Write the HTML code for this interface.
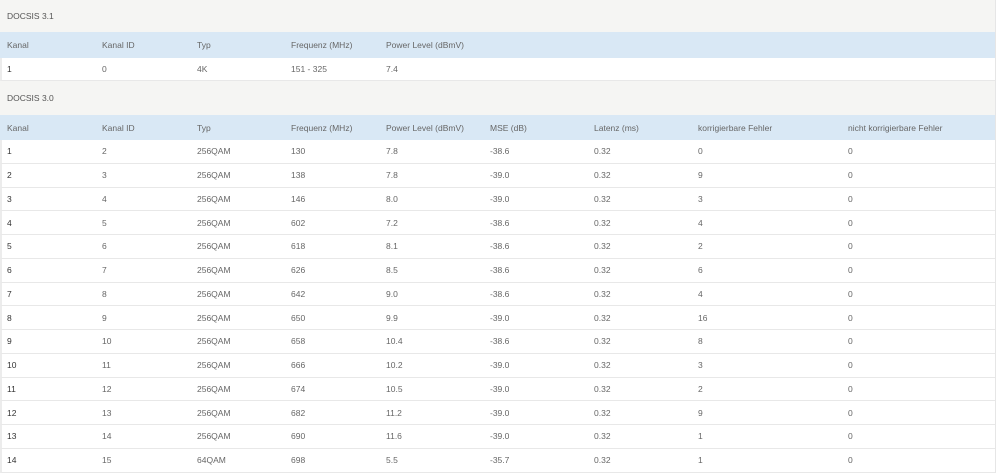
<!DOCTYPE html>
<html><head><meta charset="utf-8"><style>
body{margin:0;background:#fff;font-family:"Liberation Sans",sans-serif;font-size:8.5px;color:#666;}
#w{position:absolute;left:0;top:0;width:995px;border-right:1px solid #e6e6e6;}
.t{background:#f5f5f3;color:#555;padding-left:5px;box-sizing:border-box;display:flex;align-items:center;border-left:2px solid #f5f5f3}
.h{background:#d9e8f5;color:#666;}
.r{display:flex;align-items:center;box-sizing:border-box;border-bottom:1px solid #e8e8e8;position:relative;border-left:2px solid #ececec}
.h.r{border-left:2px solid #d9e8f5;border-bottom:none}
.r span{position:absolute;white-space:nowrap}
.r span:first-child{color:#333}
.h.r span:first-child{color:#666}
</style></head><body><div id="w">
<div class="t" style="height:32px">DOCSIS 3.1</div>
<div class="r h" style="height:26px"><span style="left:5px">Kanal</span><span style="left:100px">Kanal ID</span><span style="left:195px">Typ</span><span style="left:289px">Frequenz (MHz)</span><span style="left:384px">Power Level (dBmV)</span></div>
<div class="r" style="height:23px"><span style="left:5px">1</span><span style="left:100px">0</span><span style="left:195px">4K</span><span style="left:289px">151 - 325</span><span style="left:384px">7.4</span></div>
<div class="t" style="height:34px">DOCSIS 3.0</div>
<div class="r h" style="height:25px"><span style="left:5px">Kanal</span><span style="left:100px">Kanal ID</span><span style="left:195px">Typ</span><span style="left:289px">Frequenz (MHz)</span><span style="left:384px">Power Level (dBmV)</span><span style="left:488px">MSE (dB)</span><span style="left:592px">Latenz (ms)</span><span style="left:696px">korrigierbare Fehler</span><span style="left:846px">nicht korrigierbare Fehler</span></div>
<div id="rows"></div>
</div>
<script>
var d=[[1,2,"256QAM",130,"7.8","-38.6",0],[2,3,"256QAM",138,"7.8","-39.0",9],[3,4,"256QAM",146,"8.0","-39.0",3],[4,5,"256QAM",602,"7.2","-38.6",4],[5,6,"256QAM",618,"8.1","-38.6",2],[6,7,"256QAM",626,"8.5","-38.6",6],[7,8,"256QAM",642,"9.0","-38.6",4],[8,9,"256QAM",650,"9.9","-39.0",16],[9,10,"256QAM",658,"10.4","-38.6",8],[10,11,"256QAM",666,"10.2","-39.0",3],[11,12,"256QAM",674,"10.5","-39.0",2],[12,13,"256QAM",682,"11.2","-39.0",9],[13,14,"256QAM",690,"11.6","-39.0",1],[14,15,"64QAM",698,"5.5","-35.7",1]];
var x=[5,100,195,289,384,488,592,696,846],h="";
d.forEach(function(r){var v=[r[0],r[1],r[2],r[3],r[4],r[5],"0.32",r[6],0];h+='<div class="r" style="height:23.75px">';v.forEach(function(c,i){h+='<span style="left:'+x[i]+'px">'+c+'</span>'});h+='</div>'});
document.getElementById('rows').innerHTML=h;
</script>
</body></html>
